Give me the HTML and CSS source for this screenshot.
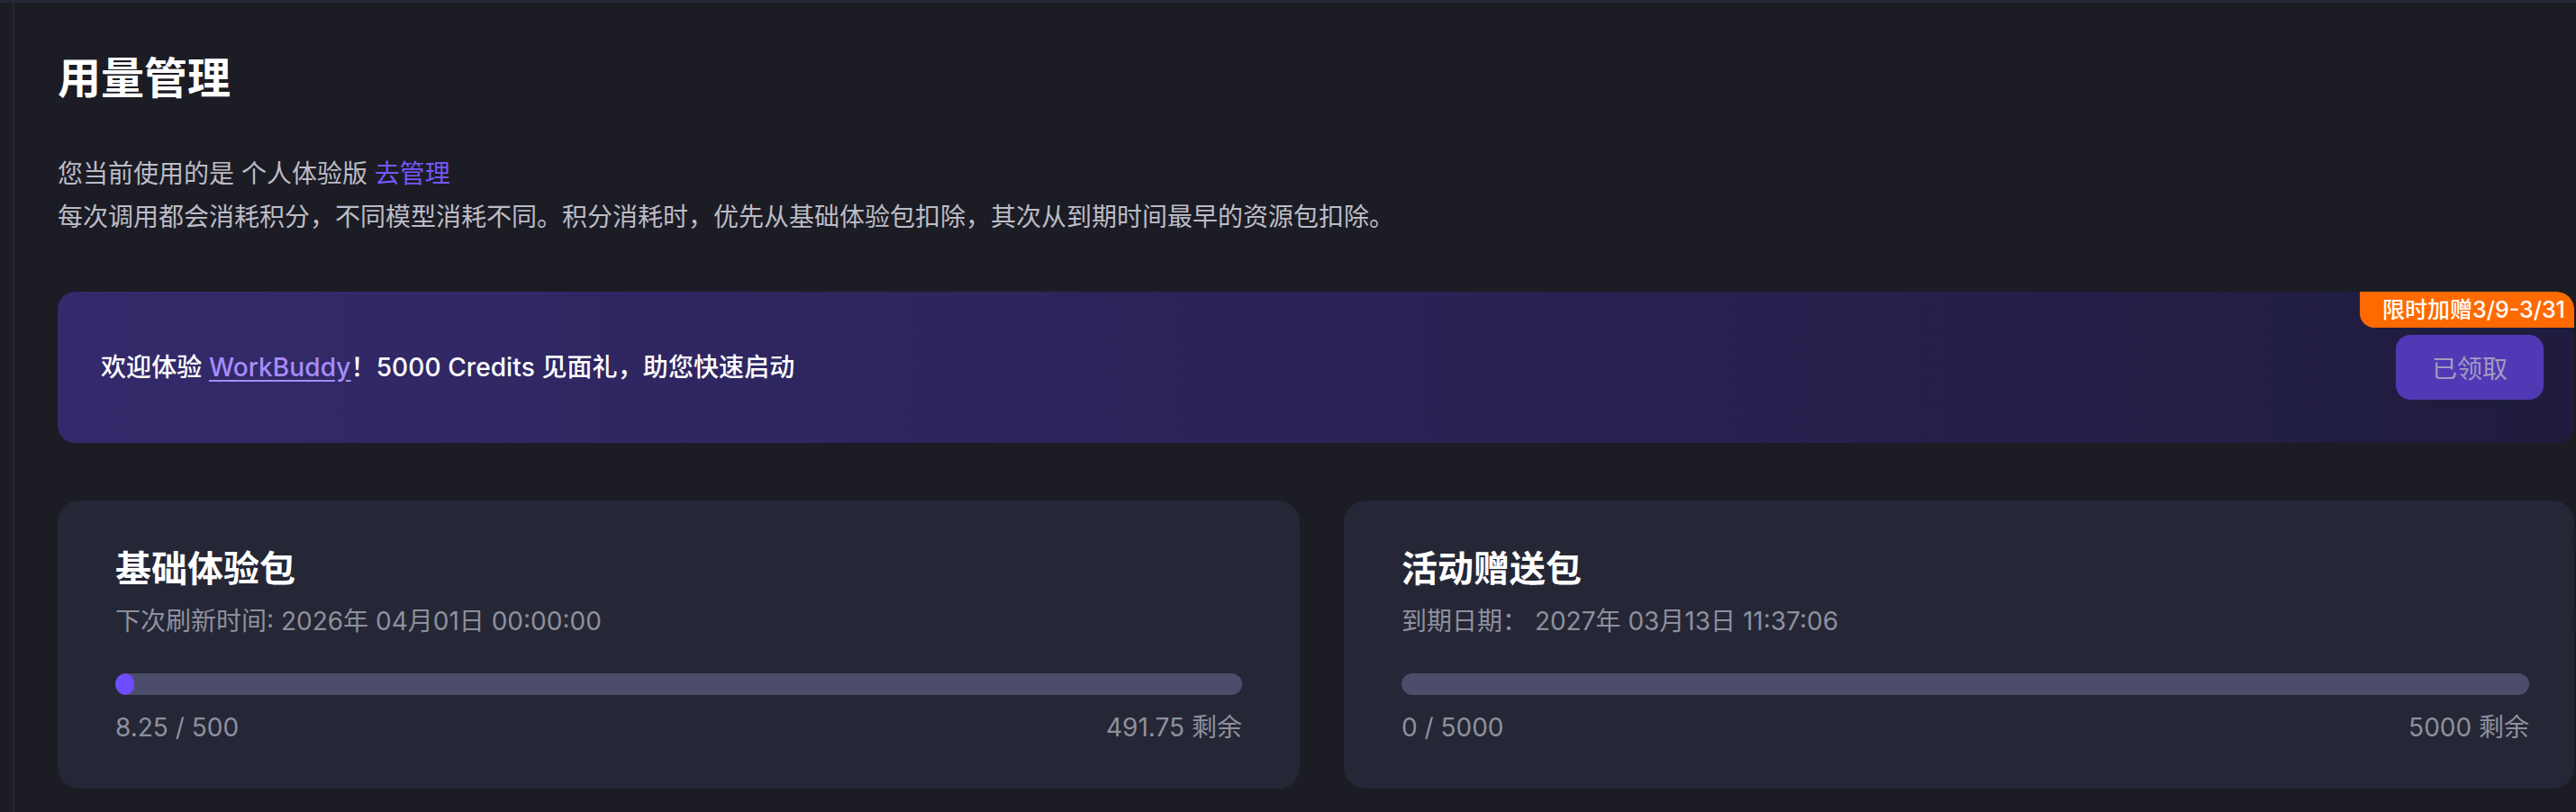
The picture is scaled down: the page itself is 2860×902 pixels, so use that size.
FILE: index.html
```html
<!DOCTYPE html>
<html lang="zh-CN">
<head>
<meta charset="utf-8">
<title>用量管理</title>
<link rel="stylesheet" href="styles.css">
</head>
<body>
<div class="app">
  <div class="rail"></div>
  <main class="main">
    <h1 class="title">用量管理</h1>
    <div class="intro">
      <p class="line">您当前使用的是 个人体验版 <a class="link">去管理</a></p>
      <p class="line">每次调用都会消耗积分，不同模型消耗不同。积分消耗时，优先从基础体验包扣除，其次从到期时间最早的资源包扣除。</p>
    </div>
    <section class="banner">
      <p class="banner-text">欢迎体验 <a class="brand">WorkBuddy</a>！5000 Credits 见面礼，助您快速启动</p>
      <button class="claim">已领取</button>
      <span class="badge">限时加赠3/9-3/31</span>
    </section>
    <div class="packs">
      <div class="card">
        <h2 class="card-title">基础体验包</h2>
        <p class="card-sub">下次刷新时间: 2026年 04月01日 00:00:00</p>
        <div class="bar"><div class="fill" style="width:1.65%"></div></div>
        <div class="meta"><span>8.25 / 500</span><span>491.75 剩余</span></div>
      </div>
      <div class="card card-alt">
        <h2 class="card-title">活动赠送包</h2>
        <p class="card-sub">到期日期： 2027年 03月13日 11:37:06</p>
        <div class="bar"><div class="fill" style="width:0%"></div></div>
        <div class="meta"><span>0 / 5000</span><span>5000 剩余</span></div>
      </div>
    </div>
  </main>
  <span class="fab fab-1"></span>
  <span class="fab fab-2"></span>
</div>
</body>
</html>
```

FILE: styles.css
```css
* { box-sizing: border-box; margin: 0; padding: 0; }

html, body { height: 100%; }

body {
  background: #1c1c25;
  font-family: "Inter", "Noto Sans CJK SC", sans-serif;
  border-top: 3px solid #252836;
  overflow: hidden;
}

.app {
  position: relative;
  display: flex;
  min-height: 899px;
}

.rail {
  flex: none;
  width: 16px;
  border-right: 2px solid #252836;
}

.main {
  flex: 1;
  min-width: 0;
  padding: 52px 2px 0 48px;
}

.title {
  font-size: 48px;
  line-height: 64px;
  font-weight: 700;
  color: #ffffff;
}

.intro { margin-top: 50px; }

.line {
  font-size: 28px;
  line-height: 48px;
  color: #bcbcc6;
}

.link { color: #7657ff; text-decoration: none; }

.banner {
  position: relative;
  margin-top: 59px;
  height: 168px;
  border-radius: 20px;
  background: linear-gradient(90deg, #342a6b 0%, #2b2459 45%, #1f1c3e 100%);
  display: flex;
  align-items: center;
  justify-content: space-between;
  padding: 0 34px 0 48px;
}

.banner-text {
  font-size: 28px;
  line-height: 40px;
  font-weight: 500;
  letter-spacing: 0.1px;
  color: #ffffff;
}

.brand {
  color: #a68cf9;
  text-decoration: underline;
  text-underline-offset: 4px;
}

.claim {
  width: 164px;
  height: 72px;
  border: 0;
  border-radius: 16px;
  background: #5139b5;
  color: #a09cbe;
  font-family: inherit;
  font-size: 28px;
}

.badge {
  position: absolute;
  top: 0;
  right: 0;
  height: 40px;
  padding: 0 10px 0 25px;
  background: #ff6a00;
  border-radius: 0 20px 0 16px;
  color: #ffffff;
  font-size: 25px;
  line-height: 40px;
  font-weight: 500;
}

.packs {
  display: grid;
  grid-template-columns: 1379px 1fr;
  gap: 49px;
  margin-top: 64px;
}

.card {
  height: 320px;
  background: #252736;
  border-radius: 24px;
  padding: 48px 64px 48px 64px;
}

.card-alt { padding-right: 50px; }

.card-title {
  font-size: 40px;
  line-height: 56px;
  font-weight: 700;
  color: #ffffff;
}

.card-sub {
  margin-top: 10px;
  font-size: 28px;
  line-height: 40px;
  color: #8f909e;
  white-space: pre;
}

.bar {
  margin-top: 38px;
  height: 24px;
  border-radius: 12px;
  background: #4b4d6b;
  overflow: hidden;
}

.fill {
  height: 100%;
  border-radius: 12px;
  background: #6e4cff;
}

.meta {
  margin-top: 16px;
  display: flex;
  justify-content: space-between;
  font-size: 28px;
  line-height: 40px;
  color: #8f909e;
}

.fab {
  position: absolute;
  right: -31px;
  width: 36px;
  height: 36px;
  border-radius: 50%;
  background: #1f2029;
}

.fab-1 { top: 580px; }
.fab-2 { top: 670px; }
```
